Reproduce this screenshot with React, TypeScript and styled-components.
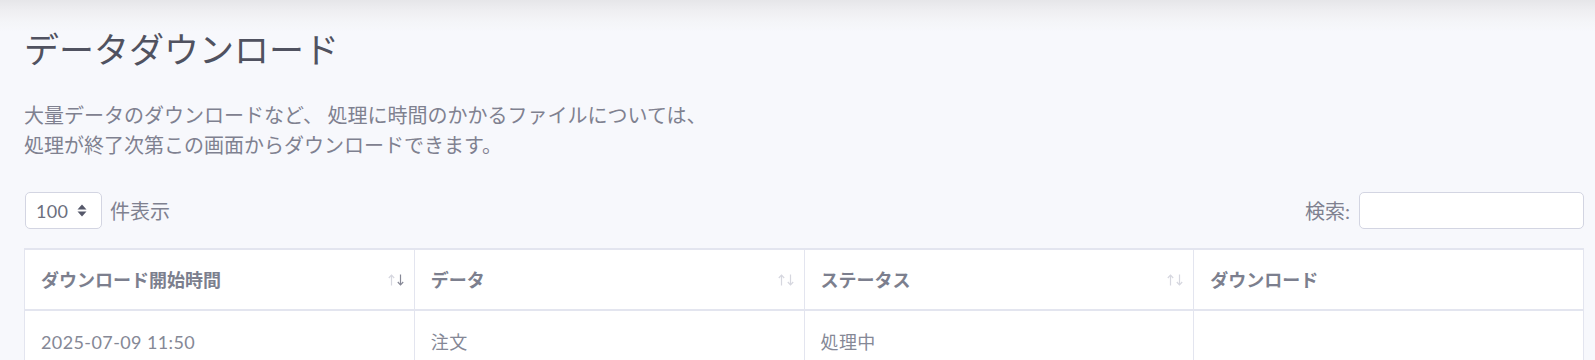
import React from "react"
import styled, { createGlobalStyle } from "styled-components"

const GlobalStyle = createGlobalStyle`
  html, body {
    margin: 0;
    padding: 0;
  }
  body {
    background-color: #f7f8fc;
    background-image: linear-gradient(to bottom, #e6e6e9 0px, #eeeef1 10px, #f4f5f8 22px, #f7f8fc 32px);
    background-repeat: no-repeat;
    font-family: Lato, "Noto Sans CJK JP", sans-serif;
    color: #7f8190;
  }
`

const Page = styled.main`
  padding: 27px 11px 0 24px;
`

const Title = styled.h2`
  margin: 0;
  font-family: "Noto Sans CJK JP", sans-serif;
  font-size: 35px;
  font-weight: 400;
  line-height: 42px;
  color: #505260;
`

const Lead = styled.p`
  margin: 31px 0 0;
  font-family: "Noto Sans CJK JP", sans-serif;
  font-size: 20px;
  line-height: 30px;
  color: #7f8190;
`

const Controls = styled.div`
  display: flex;
  align-items: center;
  justify-content: space-between;
  margin-top: 32px;
  padding-left: 1px;
`

const Field = styled.label`
  display: flex;
  align-items: center;
  gap: 8px;
  font-family: Lato, "Noto Sans CJK JP", sans-serif;
  font-size: 20px;
  color: #7f8190;
`

const SelectBox = styled.div`
  box-sizing: border-box;
  display: flex;
  align-items: center;
  justify-content: space-between;
  width: 77px;
  height: 37px;
  padding: 0 14px 0 10px;
  background: #fff;
  border: 1px solid #d3d5e2;
  border-radius: 5px;
  font-family: Lato, sans-serif;
  font-size: 18px;
  letter-spacing: 0.3px;
  color: #6c6f7e;
`

const SearchInput = styled.input`
  box-sizing: border-box;
  width: 225px;
  height: 37px;
  margin-left: 1px;
  background: #fff;
  border: 1px solid #d3d5e2;
  border-radius: 5px;
  outline: none;
`

const Table = styled.table`
  width: 100%;
  margin-top: 19px;
  border-collapse: collapse;
  table-layout: fixed;
  background: #fff;
  border: 1px solid #e3e5ef;
  border-top-width: 2px;
`

const Th = styled.th`
  position: relative;
  padding: 16px 16px;
  text-align: left;
  font-family: "Noto Sans CJK JP", sans-serif;
  font-size: 18px;
  font-weight: 700;
  line-height: 27px;
  color: #7c7f8e;
  border-right: 1px solid #e3e5ef;
  border-bottom: 2px solid #e3e5ef;
`

const Td = styled.td`
  padding: 18px 16px;
  font-family: Lato, "Noto Sans CJK JP", sans-serif;
  font-size: 18px;
  letter-spacing: 0.4px;
  line-height: 27px;
  color: #858896;
  border-right: 1px solid #e3e5ef;
  height: 40px;
  vertical-align: top;
`

const SortIcon = styled.span`
  position: absolute;
  right: 10px;
  top: 50%;
  transform: translateY(-50%);
  display: flex;
  gap: 2px;
`

const Arrow = ({ down, active }: { down?: boolean; active?: boolean }) => (
  <svg width="7" height="12" viewBox="0 0 7 12">
    <g
      stroke={active ? "#868896" : "#d6d7df"}
      strokeWidth="1.2"
      fill="none"
      transform={down ? "rotate(180 3.5 6)" : undefined}
    >
      <path d="M3.5 1.2 V11.5" />
      <path d="M0.8 4 L3.5 1.2 L6.2 4" />
    </g>
  </svg>
)

const Sort = ({ desc }: { desc?: boolean }) => (
  <SortIcon>
    <Arrow />
    <Arrow down active={desc} />
  </SortIcon>
)

const Updown = () => (
  <svg width="10" height="13" viewBox="0 0 10 13">
    <path d="M5 0.5 L9.5 5.5 H0.5 Z" fill="#55586a" />
    <path d="M5 12.5 L9.5 7.5 H0.5 Z" fill="#55586a" />
  </svg>
)

const columns = [
  { label: "ダウンロード開始時間", sortable: true, desc: true },
  { label: "データ", sortable: true },
  { label: "ステータス", sortable: true },
  { label: "ダウンロード", sortable: false },
]

const rows = [["2025-07-09 11:50", "注文", "処理中", ""]]

export default function App() {
  return (
    <>
      <GlobalStyle />
      <Page>
        <Title>データダウンロード</Title>
        <Lead>
          大量データのダウンロードなど、 処理に時間のかかるファイルについては、
          <br />
          処理が終了次第この画面からダウンロードできます。
        </Lead>
        <Controls>
          <Field>
            <SelectBox>
              100
              <Updown />
            </SelectBox>
            件表示
          </Field>
          <Field>
            検索:
            <SearchInput type="search" />
          </Field>
        </Controls>
        <Table>
          <thead>
            <tr>
              {columns.map(c => (
                <Th key={c.label}>
                  {c.label}
                  {c.sortable && <Sort desc={c.desc} />}
                </Th>
              ))}
            </tr>
          </thead>
          <tbody>
            {rows.map((r, i) => (
              <tr key={i}>
                {r.map((cell, j) => (
                  <Td key={j}>{cell}</Td>
                ))}
              </tr>
            ))}
          </tbody>
        </Table>
      </Page>
    </>
  )
}
